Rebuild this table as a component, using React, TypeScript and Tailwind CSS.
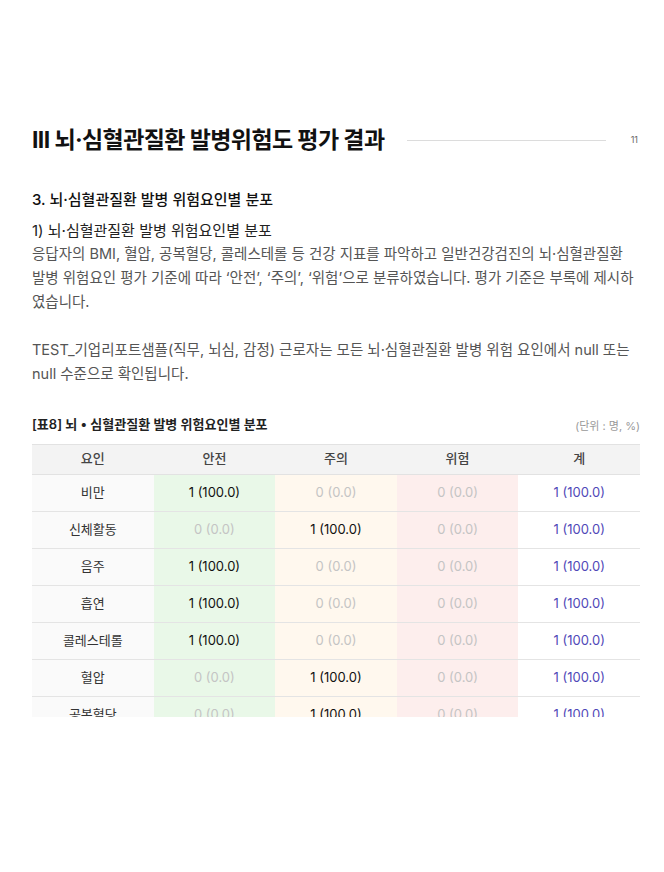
const rows = [
  { name: '비만', v: [1, 0, 0] },
  { name: '신체활동', v: [0, 1, 0] },
  { name: '음주', v: [1, 0, 0] },
  { name: '흡연', v: [1, 0, 0] },
  { name: '콜레스테롤', v: [1, 0, 0] },
  { name: '혈압', v: [0, 1, 0] },
  { name: '공복혈당', v: [0, 1, 0] },
];

const cellBg = ['bg-[#e9f8e8]', 'bg-[#fff8ee]', 'bg-[#fdeeed]'];

const fmt = (n: number) => (n ? `${n} (100.0)` : '0 (0.0)');

export default function App() {
  return (
    <div className="w-[664px] h-[872px] bg-white font-['Inter','Noto_Sans_CJK_KR',sans-serif] text-[#222] pl-[32px] pr-[24px] pt-[122px]">
      {/* Chapter header */}
      <div className="flex items-center">
        <h1 className="text-[23px] font-bold tracking-[-0.6px] text-[#111] leading-[36px]">
          III 뇌·심혈관질환 발병위험도 평가 결과
        </h1>
        <div className="ml-[23px] w-[199px] h-px bg-[#dcdcdc]" />
        <span className="ml-auto mr-[2px] text-[9px] text-[#666]">11</span>
      </div>

      <h2 className="mt-[32px] text-[15px] font-medium leading-[20px] text-[#111]">
        3. 뇌·심혈관질환 발병 위험요인별 분포
      </h2>

      <h3 className="mt-[11px] text-[15px] leading-[20px] text-[#222]">1) 뇌·심혈관질환 발병 위험요인별 분포</h3>
      <p className="mt-[1px] text-[14.5px] leading-[24px] text-[#555]">
        응답자의 BMI, 혈압, 공복혈당, 콜레스테롤 등 건강 지표를 파악하고 일반건강검진의 뇌·심혈관질환 발병 위험요인 평가 기준에 따라 ‘안전’, ‘주의’, ‘위험’으로 분류하였습니다. 평가 기준은 부록에 제시하였습니다.
      </p>

      <p className="mt-[24px] text-[14.5px] leading-[24px] text-[#555]">
        TEST_기업리포트샘플(직무, 뇌심, 감정) 근로자는 모든 뇌·심혈관질환 발병 위험 요인에서 null 또는 null 수준으로 확인됩니다.
      </p>

      {/* Table caption */}
      <div className="mt-[29px] flex items-end justify-between">
        <span className="text-[13px] font-semibold text-[#222]">[표8] 뇌 • 심혈관질환 발병 위험요인별 분포</span>
        <span className="text-[11px] text-[#999]">(단위 : 명, %)</span>
      </div>

      <div className="mt-[9px] h-[273px] overflow-hidden">
        <table className="w-[608px] table-fixed border-collapse text-[13px]">
          <thead>
            <tr className="h-[30px] bg-[#f3f3f3] border-y border-[#e2e2e2] text-[#444]">
              {['요인', '안전', '주의', '위험', '계'].map((h) => (
                <th key={h} className="font-medium">{h}</th>
              ))}
            </tr>
          </thead>
          <tbody>
            {rows.map((r) => (
              <tr key={r.name} className="h-[37px] border-b border-[#e4e4e4]">
                <td className="bg-[#fafafa] text-center text-[#333]">{r.name}</td>
                {r.v.map((n, i) => (
                  <td key={i} className={`${cellBg[i]} text-center ${n ? 'text-[#111]' : 'text-[#c4c4c4]'}`}>
                    {fmt(n)}
                  </td>
                ))}
                <td className="text-center text-[#5048b8]">1 (100.0)</td>
              </tr>
            ))}
          </tbody>
        </table>
      </div>
    </div>
  );
}
